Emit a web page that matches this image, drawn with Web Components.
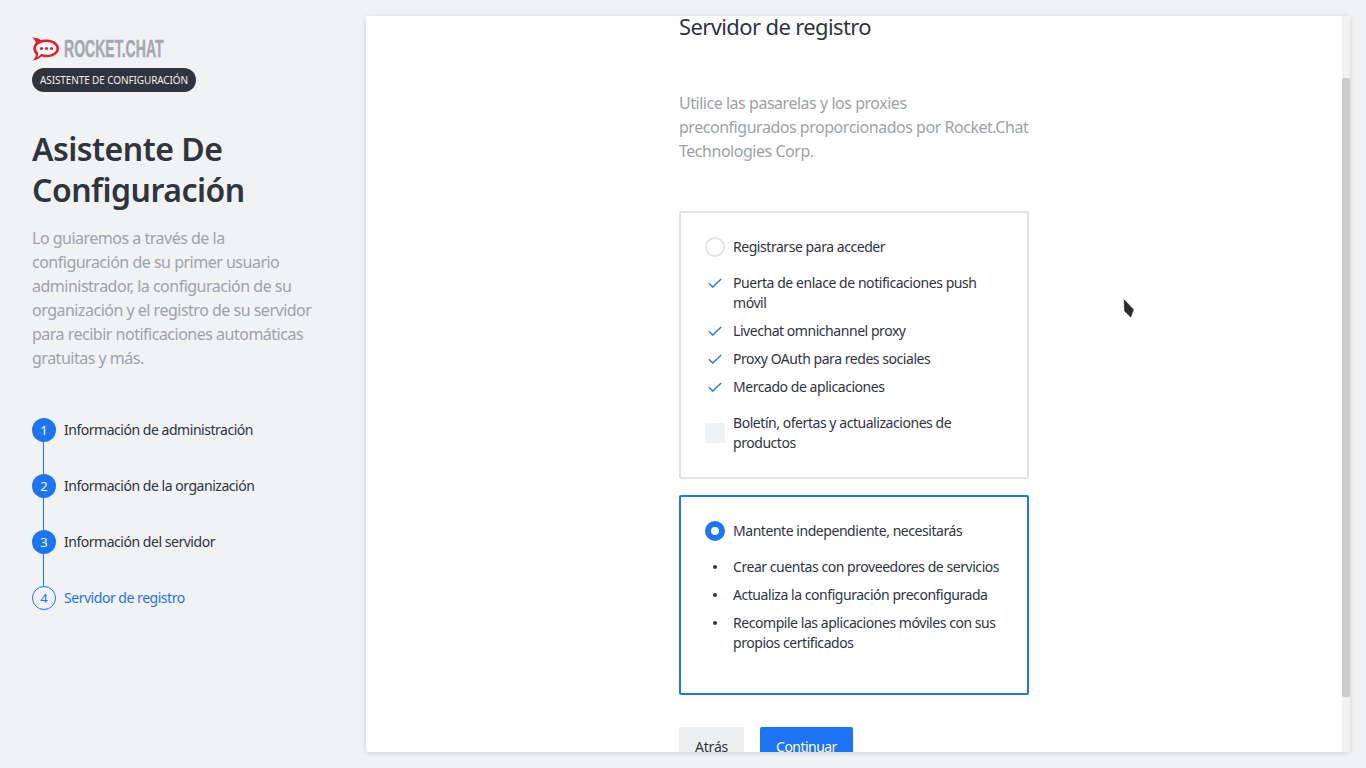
<!DOCTYPE html>
<html lang="es"><head><meta charset="utf-8"><title>Asistente</title>
<style>
html,body{margin:0;height:100%;overflow:hidden;background:#f1f2f4;font-family:"Noto Sans",sans-serif;color:#2f343d}
</style></head><body>
<rc-app>
  <rc-sidebar slot="side">
    <rc-logo></rc-logo>
    <span slot="title">Asistente De Configuración</span>
    <span slot="desc">Lo guiaremos a través de la configuración de su primer usuario administrador, la configuración de su organización y el registro de su servidor para recibir notificaciones automáticas gratuitas y más.</span>
    <rc-step slot="steps" n="1" line>Información de administración</rc-step>
    <rc-step slot="steps" n="2" line>Información de la organización</rc-step>
    <rc-step slot="steps" n="3" line>Información del servidor</rc-step>
    <rc-step slot="steps" n="4" current>Servidor de registro</rc-step>
  </rc-sidebar>
  <rc-panel slot="main">
    <span slot="title">Servidor de registro</span>
    <span slot="desc">Utilice las pasarelas y los proxies<br>preconfigurados proporcionados por Rocket.Chat Technologies Corp.</span>
    <rc-option slot="cards" label="Registrarse para acceder">
      <rc-item kind="check">Puerta de enlace de notificaciones push móvil</rc-item>
      <rc-item kind="check">Livechat omnichannel proxy</rc-item>
      <rc-item kind="check">Proxy OAuth para redes sociales</rc-item>
      <rc-item kind="check">Mercado de aplicaciones</rc-item>
      <rc-item kind="box">Boletín, ofertas y actualizaciones de productos</rc-item>
    </rc-option>
    <rc-option slot="cards" label="Mantente independiente, necesitarás" selected>
      <rc-item kind="dot">Crear cuentas con proveedores de servicios</rc-item>
      <rc-item kind="dot">Actualiza la configuración preconfigurada</rc-item>
      <rc-item kind="dot">Recompile las aplicaciones móviles con sus propios certificados</rc-item>
    </rc-option>
    <rc-button slot="actions">Atrás</rc-button>
    <rc-button slot="actions" primary>Continuar</rc-button>
  </rc-panel>
</rc-app>
<rc-cursor></rc-cursor>
<script>
function def(name, css, html){
  customElements.define(name, class extends HTMLElement{
    connectedCallback(){
      if(this.shadowRoot) return;
      const r=this.attachShadow({mode:'open'});
      r.innerHTML='<style>'+css+'</style>'+(typeof html==='function'?html(this):html);
    }
  });
}
def('rc-app',`:host{display:flex;height:100vh;box-sizing:border-box}`,`<slot name="side"></slot><slot name="main"></slot>`);
def('rc-sidebar',`:host{display:block;width:366px;flex:none;box-sizing:border-box;padding:42px 32px 0}
.badge{display:inline-block;margin-top:7px;height:24px;line-height:24px;padding:0 8px;border-radius:12px;background:#2f343d;color:#f1f2f4;font-size:10px;white-space:nowrap;letter-spacing:-.11px}
h1{margin:36px 0 0;font-size:32px;line-height:41px;font-weight:600;letter-spacing:-.5px;color:#2f343d;width:290px}
p{margin:16px 0 0;font-size:16px;line-height:24px;color:#9ea2a8;width:282px;letter-spacing:-.5px}
.steps{display:flex;flex-direction:column;margin-top:48px}`,
`<slot></slot><div><span class="badge">ASISTENTE DE CONFIGURACIÓN</span></div>
<h1><slot name="title"></slot></h1><p><slot name="desc"></slot></p><div class="steps"><slot name="steps"></slot></div>`);
def('rc-logo',`:host{display:flex;align-items:center;gap:5px;height:24px;margin-top:-5px}
svg{display:block;width:27px;height:24px;flex:none}
.t{display:inline-block;font:bold 24px/24px "Liberation Sans",sans-serif;color:#a5a8ae;transform:scaleX(.585);transform-origin:0 50%;white-space:nowrap;-webkit-text-stroke:.4px #a5a8ae}`,
`<svg viewBox="0 0 27 24"><path fill="#e01f26" d="M0 0.5C4 0.5 7 1.5 9 3.2 10.5 2.8 12 2.6 14.5 2.6 21.5 2.6 27 6.6 27 11.4 27 16.2 21.5 20.2 14.5 20.2 12.5 20.2 11 20 9.5 19.6 7.5 21.5 4.5 23.2 0.8 23.5 2.8 21.6 4 19.3 3.8 17 2 15.5 1.4 13.5 1.4 11.4 1.4 9.2 2.2 7.3 3.8 5.8 3.6 4 2.2 2 0 0.5Z"/><path fill="#fff" d="M14.5 5C20 5 24.4 7.9 24.4 11.4 24.4 14.9 20 17.8 14.5 17.8 12.6 17.8 11 17.5 9.3 16.8 8 18.3 6.8 19.4 5.2 20 6 18.4 6.3 16.6 6 15.2 4.7 14.1 4 12.8 4 11.4 4 7.9 9 5 14.5 5Z"/><circle cx="9.5" cy="11.5" r="1.6" fill="#e01f26"/><circle cx="14.5" cy="11.5" r="1.6" fill="#e01f26"/><circle cx="19.5" cy="11.5" r="1.6" fill="#e01f26"/></svg><span class="t">ROCKET.CHAT</span>`);
def('rc-step',`:host{display:flex;align-items:center;gap:8px;height:24px;position:relative;font-size:14px;line-height:20px;color:#2f343d;letter-spacing:-.47px;white-space:nowrap}
:host([line]){margin-bottom:32px}
:host([line])::after{content:"";position:absolute;left:11px;top:24px;width:1px;height:32px;background:#1d74f5}
.c{width:24px;height:24px;flex:none;box-sizing:border-box;border-radius:50%;background:#1d74f5;color:#fff;display:flex;align-items:center;justify-content:center;font-size:13px;letter-spacing:0}
:host([current]){color:#1d74f5}
:host([current]) .c{background:none;border:1px solid #1d74f5;color:#1d74f5}`,
e=>`<span class="c">${e.getAttribute('n')}</span><span><slot></slot></span>`);
def('rc-panel',`:host{display:flex;flex:none;width:984px;height:736px;margin:16px 16px 16px 0;background:#fff;border-radius:2px;box-shadow:0 1px 5px rgba(0,0,0,.14);overflow:hidden}
.s{flex:1;min-width:0;height:736px;overflow:hidden;box-sizing:border-box}
.track{width:8px;flex:none;background:#f2f2f2;padding-top:62px;box-sizing:border-box}
.thumb{height:619px;background:#ccc;border-radius:2px}
.w{width:350px;margin:0 auto;padding:72px 0 65px}
h2{margin:0;font-size:22px;line-height:24px;font-weight:400;letter-spacing:-.62px;color:#2f343d}
p{margin:53px 0 0;font-size:16px;line-height:24px;color:#9ea2a8;letter-spacing:-.47px}
.cards{display:flex;flex-direction:column;gap:16px;margin-top:48px}
.a{display:flex;gap:16px;margin-top:32px}`,
`<div class="s" id="s"><div class="w"><h2><slot name="title"></slot></h2><p><slot name="desc"></slot></p><div class="cards"><slot name="cards"></slot></div><div class="a"><slot name="actions"></slot></div></div></div><div class="track"><div class="thumb"></div></div>`);
def('rc-option',`:host{display:block;box-sizing:border-box;border:2px solid #e1e5e8;border-radius:2px;padding:24px;font-size:14px;line-height:20px;color:#2f343d}
:host([selected]){border-color:#1d74f5;padding-bottom:40px}
.h{display:flex;gap:8px;align-items:center;margin-bottom:16px;letter-spacing:-.45px}
.r{width:20px;height:20px;flex:none;box-sizing:border-box;border:2px solid #e1e5e8;border-radius:50%;background:#fff}
:host([selected]) .r{border:6.5px solid #1d74f5}
.l{display:flex;flex-direction:column;gap:8px}`,
e=>`<div class="h"><span class="r"></span><span>${e.getAttribute('label')}</span></div><div class="l"><slot></slot></div>`);
def('rc-item',`:host{display:flex;gap:8px;align-items:flex-start;letter-spacing:-.45px}
:host([kind=box]){margin-top:8px;align-items:center}
.i{width:20px;height:20px;flex:none;display:flex;align-items:center;justify-content:center}
.b{width:20px;height:20px;background:#f1f2f4;border-radius:1px}
.d{width:4px;height:4px;border-radius:50%;background:#2f343d}
svg{display:block}`,
e=>{const k=e.getAttribute('kind');
 const i=k==='check'?`<svg width="14" height="10" viewBox="0 0 14 10"><path d="M.8 5.2 4.8 9 13.2 1" fill="none" stroke="#1d74f5" stroke-width="1.3"/></svg>`:k==='box'?`<span class="b"></span>`:`<span class="d"></span>`;
 return `<span class="i">${i}</span><span><slot></slot></span>`;});
def('rc-button',`:host{display:block;height:40px;box-sizing:border-box;padding:0 16px;line-height:40px;font-size:14px;border-radius:2px;background:#eeeff1;color:#2f343d;letter-spacing:-.2px}
:host([primary]){background:#1d74f5;color:#fff;letter-spacing:-.53px}`,`<slot></slot>`);
def('rc-cursor',`:host{position:fixed;left:1120px;top:295px;width:20px;height:28px;display:block;pointer-events:none}`,
`<svg width="20" height="28" viewBox="0 0 20 28" style="display:block"><path d="M3.5 3.5 14 14.5 11 23 4 16Z" fill="#2b2b2b" stroke="#fff" stroke-opacity=".55" stroke-width="1"/></svg>`);
document.querySelector('rc-panel').shadowRoot.getElementById('s').scrollTop=74;
</script>
</body></html>
